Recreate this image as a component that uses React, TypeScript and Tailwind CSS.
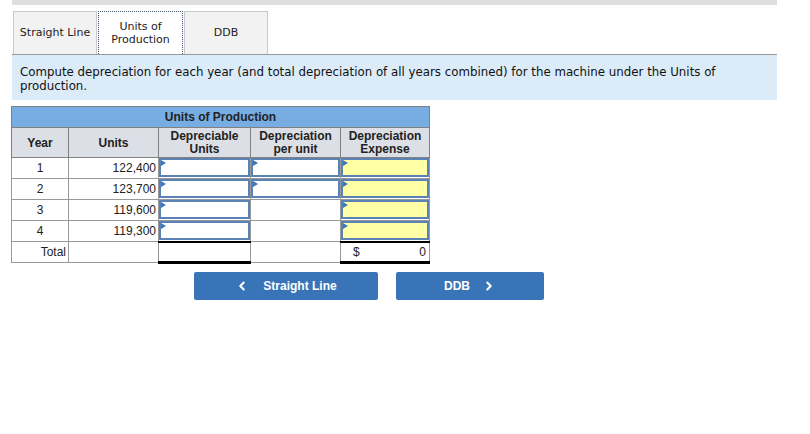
import { ChevronLeft, ChevronRight } from 'lucide-react';

const rows = [
  { year: '1', units: '122,400', perUnit: true },
  { year: '2', units: '123,700', perUnit: true },
  { year: '3', units: '119,600', perUnit: false },
  { year: '4', units: '119,300', perUnit: false },
];

// Blue-bordered answer box with the small flag in its corner
function InputBox({ yellow }: { yellow?: boolean }) {
  return (
    <div
      className={`relative h-[19px] border-2 border-[#5b82b5] ${
        yellow ? 'bg-[#ffffa6]' : 'bg-white'
      }`}
    >
      <span className="absolute left-0 top-0 h-0 w-0 border-y-[3px] border-l-[5px] border-y-transparent border-l-[#3b78c4]" />
    </div>
  );
}

export default function App() {
  return (
    <div className="h-[434px] w-[810px] bg-white pl-3 pr-[33px] font-['DejaVu_Sans',Verdana,sans-serif] text-[#222]">
      {/* top strip */}
      <div className="h-[5px] bg-[#dedede]" />

      {/* tabs */}
      <div className="mt-[6px] flex border-b border-[#999] pl-px">
        <div className="flex h-[43px] w-[84px] items-center justify-center border border-b-0 border-[#c9c9c9] bg-[#f2f2f2] text-[11px]">
          Straight Line
        </div>
        <div className="ml-px flex h-[43px] w-[85px] items-center justify-center border border-dotted border-b-0 border-[#44546a] bg-white text-center text-[11px] leading-[13px]">
          Units of
          <br />
          Production
        </div>
        <div className="ml-px flex h-[43px] w-[84px] items-center justify-center border border-b-0 border-[#c9c9c9] bg-[#f2f2f2] text-[11px]">
          DDB
        </div>
      </div>

      {/* instructions */}
      <div className="bg-[#dbebf8] px-2 pb-[7px] pt-[10px] text-[11.8px] leading-[14px] text-[#111]">
        Compute depreciation for each year (and total depreciation of all years combined) for the machine under the Units of
        production.
      </div>

      {/* table */}
      <table className="-ml-px mt-[6px] border-collapse font-['Liberation_Sans',Arial,sans-serif] text-[12px] text-[#222]">
        <colgroup>
          <col className="w-[57px]" />
          <col className="w-[90px]" />
          <col className="w-[92px]" />
          <col className="w-[90px]" />
          <col className="w-[89px]" />
        </colgroup>
        <thead>
          <tr>
            <th
              colSpan={5}
              className="h-[21px] border border-[#808080] bg-[#77ade3] p-0 text-center font-bold"
            >
              Units of Production
            </th>
          </tr>
          <tr className="bg-[#dcdfe6]">
            <th className="h-[30px] border border-[#808080] p-0 font-bold">Year</th>
            <th className="border border-[#808080] p-0 font-bold">Units</th>
            <th className="border border-[#808080] p-0 leading-[13px] font-bold">
              Depreciable
              <br />
              Units
            </th>
            <th className="border border-[#808080] p-0 leading-[13px] font-bold">
              Depreciation
              <br />
              per unit
            </th>
            <th className="border border-[#808080] p-0 leading-[13px] font-bold">
              Depreciation
              <br />
              Expense
            </th>
          </tr>
        </thead>
        <tbody>
          {rows.map((r) => (
            <tr key={r.year}>
              <td className="h-[21px] border border-[#999] p-0 text-center">{r.year}</td>
              <td className="border border-[#999] p-0 pr-[2px] text-right">{r.units}</td>
              <td className="border border-[#999] p-0 align-top">
                <InputBox />
              </td>
              <td className="border border-[#999] p-0 align-top">
                {r.perUnit && <InputBox />}
              </td>
              <td className="border border-[#999] p-0 align-top">
                <InputBox yellow />
              </td>
            </tr>
          ))}
          <tr>
            <td className="h-[20px] border border-[#999] p-0 pr-[2px] text-right">Total</td>
            <td className="border border-[#999] p-0" />
            <td className="border border-[#999] border-b-[3px] border-t-2 border-b-black border-t-black p-0" />
            <td className="border border-[#999] p-0" />
            <td className="border border-[#999] border-b-[3px] border-t-2 border-b-black border-t-black p-0">
              <div className="flex justify-between px-[12px] pr-[3px]">
                <span>$</span>
                <span>0</span>
              </div>
            </td>
          </tr>
        </tbody>
      </table>

      {/* navigation */}
      <div className="ml-[182px] mt-[8px] flex gap-[18px] font-['Liberation_Sans',Arial,sans-serif] text-[12px] font-bold text-white">
        <button className="flex h-[28px] w-[184px] items-center justify-center gap-[14px] rounded-[2px] bg-[#3a74b8]">
          <ChevronLeft size={14} strokeWidth={3.5} />
          <span>Straight Line</span>
        </button>
        <button className="flex h-[28px] w-[148px] items-center justify-center gap-[12px] rounded-[2px] bg-[#3a74b8]">
          <span>DDB</span>
          <ChevronRight size={14} strokeWidth={3.5} />
        </button>
      </div>
    </div>
  );
}
